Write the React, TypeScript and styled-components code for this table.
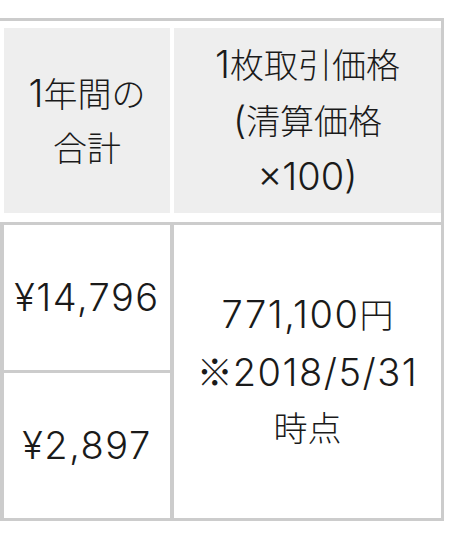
import * as React from 'react';
import styled, { createGlobalStyle } from 'styled-components';

const GlobalStyle = createGlobalStyle`
    * {
        box-sizing: border-box;
    }
    body {
        margin: 0;
        background: #fff;
    }
`;

const Page = styled.div`
    padding-top: 18px;
`;

const PriceTable = styled.table`
    width: 444px;
    border-collapse: separate;
    border-spacing: 0;
    table-layout: fixed;
    border-top: 3px solid #ccc;
    border-right: 3px solid #ccc;
    border-bottom: 3px solid #ccc;
    font-family: Inter, 'Noto Sans CJK JP', sans-serif;
    font-size: 34px;
    font-weight: 300;
    color: #1a1a1a;
`;

const HeadCell = styled.th<{ $width?: number }>`
    width: ${p => (p.$width ? `${p.$width}px` : 'auto')};
    height: 201px;
    padding: 0;
    background: #eee;
    background-clip: padding-box;
    border-top: 7px solid #fff;
    border-bottom: 9px solid #fff;
    border-left: 4px solid #fff;
    font-weight: 300;
    line-height: 54px;
    text-align: center;
    vertical-align: middle;
`;

const BodyCell = styled.td`
    height: 148px;
    padding: 0;
    border-top: 3px solid #ccc;
    border-left: 4px solid #ccc;
    line-height: 55px;
    text-align: center;
    vertical-align: middle;
    white-space: nowrap;
`;

// Latin figures in the source font sit larger than the kana/kanji
const Num = styled.span<{ $spacing?: number }>`
    font-size: 38px;
    letter-spacing: ${p => p.$spacing ?? 1.5}px;
`;

const Mark = styled.span`
    font-family: 'Noto Sans CJK JP', sans-serif;
    font-size: 36px;
`;

export default function App() {
    return (
        <Page>
            <GlobalStyle />
            <PriceTable>
                <thead>
                    <tr>
                        <HeadCell $width={170}>
                            <Num $spacing={0}>1</Num>年間の
                            <br />
                            合計
                        </HeadCell>
                        <HeadCell>
                            <Num $spacing={0}>1</Num>枚取引価格
                            <br />
                            <Num $spacing={0}>(</Num>清算価格
                            <br />
                            <Num $spacing={0}>×100)</Num>
                        </HeadCell>
                    </tr>
                </thead>
                <tbody>
                    <tr>
                        <BodyCell>
                            <Num>¥14,796</Num>
                        </BodyCell>
                        <BodyCell rowSpan={2}>
                            <Num>771,100</Num>円
                            <br />
                            <Mark>※</Mark>
                            <Num>2018/5/31</Num>
                            <br />
                            時点
                        </BodyCell>
                    </tr>
                    <tr>
                        <BodyCell>
                            <Num>¥2,897</Num>
                        </BodyCell>
                    </tr>
                </tbody>
            </PriceTable>
        </Page>
    );
}
